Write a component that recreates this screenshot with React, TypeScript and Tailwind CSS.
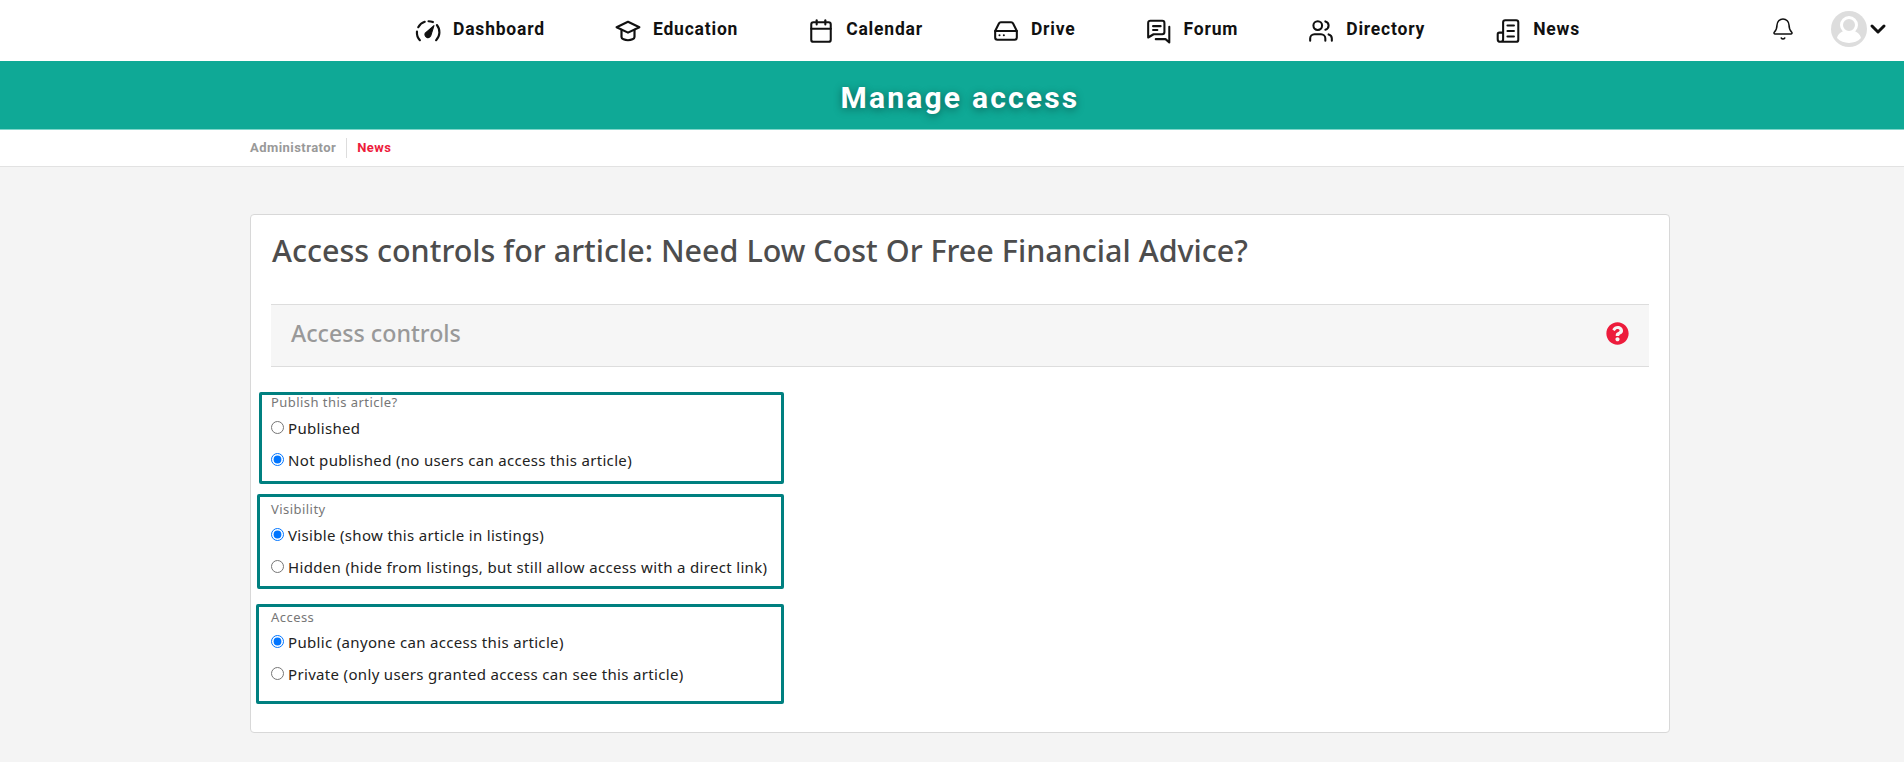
import React from "react";
import { Bell, Calendar, ChevronDown, HardDrive, Users } from "lucide-react";
import { FaQuestionCircle } from "react-icons/fa";

function Gauge({ className }: { className?: string }) {
  return (
    <svg viewBox="0 0 24 24" fill="none" stroke="currentColor" strokeWidth="2" strokeLinecap="round" className={className}>
      <path d="M4.500 20.500A10.500 10.500 0 0 1 1.800 12.500" />
      <path d="M3 8.500A10.500 10.500 0 0 1 9 3.500" />
      <path d="M12.500 3A10.500 10.500 0 0 1 16.500 3.800" />
      <path d="M20.200 6.500A10.500 10.500 0 0 1 19.500 20.500" />
      <path d="M17.500 7 14.500 16.500a2.800 2.800 0 0 1-5-2.600z" fill="currentColor" strokeWidth="1" strokeLinejoin="round" />
    </svg>
  );
}

function CapIcon({ className }: { className?: string }) {
  return (
    <svg viewBox="0 0 24 24" fill="none" stroke="currentColor" strokeWidth="2" strokeLinecap="round" strokeLinejoin="round" className={className}>
      <path d="M12 3.500 1.500 8.500 12 13.500l10.500-5z" />
      <path d="M6 11v6.500c0 1.800 3 3 6 3s6-1.200 6-3V11" />
    </svg>
  );
}

function ForumIcon({ className }: { className?: string }) {
  return (
    <svg viewBox="0 0 24 24" fill="none" stroke="currentColor" strokeWidth="1.9" strokeLinecap="round" strokeLinejoin="round" className={className}>
      <path d="M4 2.500h11a2 2 0 0 1 2 2v8.500a2 2 0 0 1-2 2H7l-5 3V4.500a2 2 0 0 1 2-2z" />
      <path d="M6.500 7.500h7M6.500 11h4" />
      <path d="M21.500 8v14.500l-3.500-3H9" />
    </svg>
  );
}

function NewsIcon({ className }: { className?: string }) {
  return (
    <svg viewBox="0 0 24 24" fill="none" stroke="currentColor" strokeWidth="1.9" strokeLinecap="round" strokeLinejoin="round" className={className}>
      <path d="M5 22a2.500 2.500 0 0 0 2.500-2.500V4a2 2 0 0 1 2-2h10a2 2 0 0 1 2 2v16a2 2 0 0 1-2 2H5a2.500 2.500 0 0 1-2.500-2.500V15a1.500 1.500 0 0 1 1.500-1.500h3.500" />
      <path d="M11.500 7h6M11.500 12h6M11.500 17h6" />
    </svg>
  );
}

const navItems = [
  { label: "Dashboard", icon: <Gauge className="w-[26px] h-[26px]" /> },
  { label: "Education", icon: <CapIcon className="w-[26px] h-[26px]" /> },
  { label: "Calendar", icon: <Calendar className="w-[26px] h-[26px]" strokeWidth={1.9} /> },
  { label: "Drive", icon: <HardDrive className="w-[26px] h-[26px]" strokeWidth={1.9} /> },
  { label: "Forum", icon: <ForumIcon className="w-[26px] h-[26px]" /> },
  { label: "Directory", icon: <Users className="w-[26px] h-[26px]" strokeWidth={1.9} /> },
  { label: "News", icon: <NewsIcon className="w-[26px] h-[26px]" /> },
];

function RadioGroup({
  name,
  legend,
  options,
  checked,
  legendGap,
  className,
}: {
  name: string;
  legend: string;
  options: string[];
  checked: number;
  legendGap: string;
  className: string;
}) {
  return (
    <fieldset className={`border-[3px] border-[#008080] rounded-[2px] ${className}`}>
      <div className={`text-[13px] leading-[14px] tracking-[0.45px] text-[#777] ${legendGap}`}>{legend}</div>
      {options.map((opt, i) => (
        <label key={opt} className="flex items-center h-[32px] text-[15px] text-[#222] tracking-[0.33px] whitespace-nowrap">
          <input type="radio" name={name} defaultChecked={i === checked} className="mr-[4px] ml-0 my-0 -mt-[2px]" />
          {opt}
        </label>
      ))}
    </fieldset>
  );
}

export default function App() {
  return (
    <div className="min-h-[762px] bg-[#f4f4f4] font-['Noto_Sans',sans-serif] overflow-hidden">
      {/* TOP NAV */}
      <div className="h-[61px] bg-white flex items-center pl-[415px] pr-[14px]">
        <div className="flex items-center gap-[70px]">
          {navItems.map((item) => (
            <div key={item.label} className="flex items-center gap-[12px] text-[#111]">
              {item.icon}
              <span className="font-['Roboto',sans-serif] font-bold text-[17.5px] tracking-[0.8px] -mt-[2px]">{item.label}</span>
            </div>
          ))}
        </div>
        <div className="ml-auto flex items-center -mt-[3px]">
          <Bell className="w-[24px] h-[24px] mr-[36px] text-[#111]" strokeWidth={1.5} />
          <svg viewBox="0 0 36 36" className="w-[36px] h-[36px]">
            <circle cx="18" cy="18" r="18" fill="#ddd" />
            <circle cx="18" cy="14" r="7.500" fill="#ddd" stroke="#fff" strokeWidth="3" />
            <path d="M6 27c1-4 4-6.500 7.500-7 3 1.600 6 1.600 9 0 3.500.5 6.500 3 7.500 7-6 6.500-18 6.500-24 0z" fill="#fff" />
          </svg>
          <ChevronDown className="w-[24px] h-[24px] text-[#111] -ml-[1px]" strokeWidth={3} />
        </div>
      </div>

      {/* TITLE BAR */}
      <div className="h-[69px] bg-[#0fa996] border-b border-[#7fd6ca] flex items-center justify-center pl-[16px]">
        <h1 className="font-['Roboto',sans-serif] font-bold text-[30px] tracking-[2.2px] text-white mt-[5px] [text-shadow:0_2px_8px_rgba(0,0,0,0.4)]">
          Manage access
        </h1>
      </div>

      {/* BREADCRUMB */}
      <div className="h-[37px] bg-white border-b border-[#e2e2e2] flex items-center pl-[250px]">
        <span className="font-['Roboto',sans-serif] font-bold text-[13px] tracking-[0.45px] text-[#999] pr-[10px] border-r border-[#ddd] leading-[20px]">Administrator</span>
        <span className="font-['Roboto',sans-serif] font-bold text-[13px] tracking-[0.45px] text-[#ed1c3c] pl-[10px]">News</span>
      </div>

      {/* CARD */}
      <div className="mt-[47px] ml-[250px] w-[1420px] h-[519px] bg-white border border-[#d8d8d8] rounded-[4px]">
        <h2 className="text-[30.5px] font-medium leading-[40px] text-[#4d4d4d] pl-[21px] pt-[15px]">
          Access controls for article: Need Low Cost Or Free Financial Advice?
        </h2>
        <div className="mt-[34px] mx-[20px] h-[63px] bg-[#f6f6f6] border-y border-[#ddd] flex items-center justify-between pl-[20px] pr-[20px]">
          <span className="text-[23.2px] font-medium text-[#999] -mt-[4px]">Access controls</span>
          <FaQuestionCircle className="w-[23px] h-[23px] text-[#ed1c3c] -mt-[4px]" />
        </div>
        <RadioGroup
          name="publish"
          legend="Publish this article?"
          options={["Published", "Not published (no users can access this article)"]}
          checked={1}
          legendGap="mb-[3px]"
          className="mt-[25px] ml-[8px] pl-[9px] w-[525px] h-[92px]"
        />
        <RadioGroup
          name="visibility"
          legend="Visibility"
          options={["Visible (show this article in listings)", "Hidden (hide from listings, but still allow access with a direct link)"]}
          checked={0}
          legendGap="mb-[3px]"
          className="mt-[10px] ml-[6px] pl-[11px] pt-[5px] w-[527px] h-[95px]"
        />
        <RadioGroup
          name="access"
          legend="Access"
          options={["Public (anyone can access this article)", "Private (only users granted access can see this article)"]}
          checked={0}
          legendGap="mb-[2px]"
          className="mt-[15px] ml-[5px] pl-[12px] pt-[3px] w-[528px] h-[100px]"
        />
      </div>
    </div>
  );
}
